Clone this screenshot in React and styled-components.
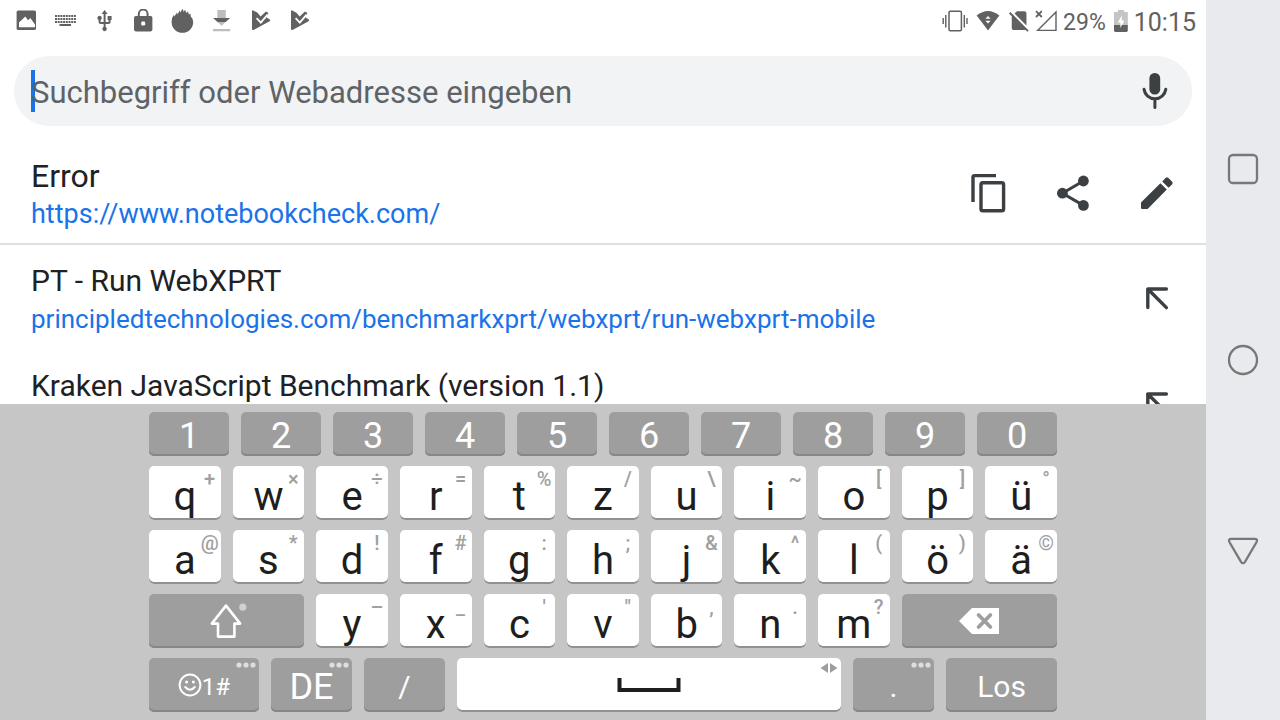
import React from 'react'
import styled, { createGlobalStyle } from 'styled-components'

const digits = ['1', '2', '3', '4', '5', '6', '7', '8', '9', '0']

const topLetters = [
    ['q', '+'], ['w', '×'], ['e', '÷'], ['r', '='], ['t', '%'], ['z', '/'],
    ['u', '\\'], ['i', '~'], ['o', '['], ['p', ']'], ['ü', '°'],
]

const homeLetters = [
    ['a', '@'], ['s', '*'], ['d', '!'], ['f', '#'], ['g', ':'], ['h', ';'],
    ['j', '&'], ['k', '^'], ['l', '('], ['ö', ')'], ['ä', '©'],
]

const bottomLetters = [
    ['y', '–'], ['x', '_'], ['c', "'"], ['v', '"'], ['b', ','], ['n', '.'], ['m', '?'],
]

const PlayCheck = () => (
    <StatusIcon viewBox="0 0 24 24">
        <path d="M4 2.2Q4 1 5.2 1.4L9.5 3.8 12.6 7.4 18 2.4 20.4 4 18.6 8.6 21.8 10.6Q22.6 11.4 21.6 12.2L6 20.8Q4 21.6 4 20z" />
        <path d="M8.6 9.2L12.8 13.6 19.6 5.6" fill="none" stroke="#fff" strokeWidth="1.8" />
    </StatusIcon>
)

const ArrowInsert = () => (
    <svg width="40" height="40" viewBox="0 0 40 40" fill="none" stroke="#3c4043" strokeWidth="3.4" strokeLinecap="round" strokeLinejoin="round">
        <path d="M29.4 11H10.8V29.6M10.8 11L29.4 29.6" />
    </svg>
)

const Dots = () => (
    <svg width="20" height="6" viewBox="0 0 20 6" fill="#dedede">
        <circle cx="3" cy="3" r="2.6" />
        <circle cx="10" cy="3" r="2.6" />
        <circle cx="17" cy="3" r="2.6" />
    </svg>
)

const StatusBar = () => (
    <Status>
        <Notifications>
            <StatusIcon viewBox="0 0 24 24">
                <rect x="2.6" y="1.4" width="19.4" height="19.6" rx="1.6" />
                <path d="M5 18.3V13.4L11.3 7.5 14 11.2 16.3 9 21 15.4V18.3z" fill="#fff" />
            </StatusIcon>
            <StatusIcon viewBox="0 0 24 24">
                <path d="M2 7H23M2 10H23M2 13H23" fill="none" stroke="#616161" strokeWidth="2" strokeDasharray="2 .7" />
                <rect x="6.5" y="15" width="11.5" height="2" />
            </StatusIcon>
            <StatusIcon viewBox="0 0 24 24">
                <path transform="translate(.6 0)" d="M15 7v4h1v2h-3V5h2l-3-4-3 4h2v8H8v-2.07c.7-.37 1.2-1.08 1.2-1.93 0-1.21-.99-2.2-2.2-2.2-1.21 0-2.2.99-2.2 2.2 0 .85.5 1.56 1.2 1.93V13c0 1.11.89 2 2 2h3v3.05c-.71.37-1.2 1.1-1.2 1.95 0 1.22.99 2.2 2.2 2.2 1.21 0 2.2-.98 2.2-2.2 0-.85-.49-1.58-1.2-1.95V15h3c1.11 0 2-.89 2-2v-2h1V7h-4z" />
            </StatusIcon>
            <StatusIcon viewBox="0 0 24 24">
                <rect x="3" y="7" width="18.4" height="15.4" rx="1.8" />
                <path d="M7.8 8V5a4.4 4.4 0 0 1 8.8 0v3" fill="none" stroke="#616161" strokeWidth="2" />
                <rect x="10.2" y="12.6" width="4" height="4" rx="1.4" fill="#fff" />
            </StatusIcon>
            <StatusIcon viewBox="0 0 24 24">
                <path d="M1.6 13Q1.5 8.6 4 5.8L4.4 7.6 7 3.6 7.6 5.4 9.6 1.6 10.4 3.6 12.6 -.4 13.8 3 15 .4 16.4 4 18 2.2 18.8 5.4 20.4 4.6 20.8 7.4Q23.2 9.6 23.2 13A10.8 10.8 0 0 1 1.6 13z" />
            </StatusIcon>
            <StatusIcon viewBox="0 0 24 24">
                <path d="M8.4 1H16.8V9H21L12.6 16.8 4.2 9H8.4zM4 20H21.2V22.2H4z" fill="#bdbdbd" />
                <path d="M4.2 9H21L16.6 13H8.6z" />
            </StatusIcon>
            <PlayCheck />
            <PlayCheck />
        </Notifications>
        <System>
            <StatusIcon $width={32} viewBox="0 0 32 24">
                <rect x="10" y="2.3" width="12.4" height="19.4" rx="1.2" fill="none" stroke="#616161" strokeWidth="1.5" />
                <path d="M4.2 9V15M6.8 6V18.6M25.3 6V18.6M28 9V15" fill="none" stroke="#616161" strokeWidth="1.4" />
            </StatusIcon>
            <StatusIcon $width={28} viewBox="0 0 28 24">
                <path d="M1.7 6.4Q13-2.6 24.3 6.4L13 21.4z" />
                <path d="M13 7L15.6 9.8H10.4zM13 14.6L15.6 11.8H10.4z" fill="#fff" />
            </StatusIcon>
            <StatusIcon viewBox="0 0 24 24">
                <path transform="translate(-.5 -1) scale(1.05)" d="M19 5c0-1.1-.9-2-1.99-2h-7L7.66 5.34 19 16.68V5zM3.65 3.88L2.38 5.15 5 7.77V19c0 1.1.9 2 2 2h10.01c.35 0 .67-.1.96-.26l1.88 1.88 1.27-1.27L3.65 3.88z" />
            </StatusIcon>
            <StatusIcon viewBox="0 0 24 24">
                <path d="M1 2.2L6.8 8M6.8 2.2L1 8" fill="none" stroke="#616161" strokeWidth="1.8" />
                <path d="M2.6 21.4L21 3V21.4z" fill="none" stroke="#616161" strokeWidth="1.4" />
            </StatusIcon>
            <Percent>29%</Percent>
            <StatusIcon $width={18} viewBox="0 0 18 24">
                <path d="M8 1H14.2V3H17.8V17H4V3H8z" fill="#c4c4c4" />
                <path d="M4 16H17.8V21.6Q17.8 23 16.4 23H5.4Q4 23 4 21.6z" />
                <path d="M11.8 6.6V11.6H14.4L10.4 19V13.6H7.8z" fill="#fff" />
            </StatusIcon>
            <Clock>10:15</Clock>
        </System>
    </Status>
)

const SearchBar = () => (
    <Search>
        <Caret />
        <SearchInput type="text" aria-label="Suchbegriff oder Webadresse eingeben" placeholder="Suchbegriff oder Webadresse eingeben" />
        <IconButton aria-label="Sprachsuche">
            <svg width="40" height="40" viewBox="0 0 40 40">
                <rect x="14.4" y="2" width="10.8" height="21.4" rx="5.2" fill="#3c4043" />
                <path d="M9 18.2a11 11 0 0 0 21.8 0M19.9 29.6V36.6" fill="none" stroke="#3c4043" strokeWidth="3" strokeLinecap="round" />
            </svg>
        </IconButton>
    </Search>
)

const Suggestions = () => (
    <SuggestionList>
        <Suggestion $divider>
            <SuggestionText>
                <Title $large>Error</Title>
                <Url $large href="https://www.notebookcheck.com/">https://www.notebookcheck.com/</Url>
            </SuggestionText>
            <IconButton aria-label="Kopieren">
                <svg width="40" height="40" viewBox="0 0 40 40" fill="none" stroke="#3c4043" strokeWidth="3.4">
                    <path d="M27 2.6H5.6Q4 2.6 4 4.2V29" />
                    <rect x="12" y="9.8" width="22.6" height="28" rx="1.8" />
                </svg>
            </IconButton>
            <IconButton aria-label="Teilen">
                <svg width="40" height="40" viewBox="0 0 40 40" fill="#3c4043">
                    <path d="M30.4 8L9.4 20.2 30.4 32.4" fill="none" stroke="#3c4043" strokeWidth="3" />
                    <circle cx="9.4" cy="20.2" r="5.4" />
                    <circle cx="30.4" cy="8" r="5.4" />
                    <circle cx="30.4" cy="32.4" r="5.4" />
                </svg>
            </IconButton>
            <IconButton aria-label="Bearbeiten">
                <svg width="40" height="40" viewBox="0 0 40 40" fill="#3c4043">
                    <path d="M4 29.4L23.4 10.2 29.8 16.6 10.6 36H5Q4 36 4 35zM25.2 8.4L28.8 4.8Q30 3.8 31.2 4.8L35.2 8.8Q36.2 10 35.2 11.2L31.6 14.8z" />
                </svg>
            </IconButton>
        </Suggestion>
        <Suggestion>
            <SuggestionText>
                <Title>PT - Run WebXPRT</Title>
                <Url href="https://principledtechnologies.com/benchmarkxprt/webxprt/run-webxprt-mobile">
                    principledtechnologies.com/benchmarkxprt/webxprt/run-webxprt-mobile
                </Url>
            </SuggestionText>
            <IconButton aria-label="Übernehmen"><ArrowInsert /></IconButton>
        </Suggestion>
        <Suggestion>
            <SuggestionText>
                <Title>Kraken JavaScript Benchmark (version 1.1)</Title>
            </SuggestionText>
            <IconButton aria-label="Übernehmen"><ArrowInsert /></IconButton>
        </Suggestion>
    </SuggestionList>
)

const letterKeys = (letters) => letters.map(([letter, hint]) => (
    <LetterKey key={letter}>
        <Letter>{letter}</Letter>
        <Hint>{hint}</Hint>
    </LetterKey>
))

const Keyboard = () => (
    <KeyboardPanel>
        <DigitRow>
            {digits.map((digit) => <DarkKey key={digit}><Label $size={36}>{digit}</Label></DarkKey>)}
        </DigitRow>
        <LetterRow>{letterKeys(topLetters)}</LetterRow>
        <LetterRow>{letterKeys(homeLetters)}</LetterRow>
        <LetterRow>
            <WideKey aria-label="Umschalt">
                <svg width="40" height="40" viewBox="0 0 40 40">
                    <path d="M19 4.6L33.2 22.6H27.4V35.6H11V22.6H4.8z" fill="none" stroke="#fff" strokeWidth="2.6" strokeLinejoin="round" />
                    <circle cx="35.8" cy="6.2" r="3.6" fill="#d0d0d0" />
                </svg>
            </WideKey>
            {letterKeys(bottomLetters)}
            <WideKey aria-label="Löschen">
                <svg width="40" height="26" viewBox="0 0 40 26">
                    <path d="M0 13L13 0H40V26H13z" fill="#fff" />
                    <path d="M19.6 7L31.4 19M31.4 7L19.6 19" stroke="#9e9e9e" strokeWidth="3.8" strokeLinecap="round" />
                </svg>
            </WideKey>
        </LetterRow>
        <ActionRow>
            <DarkKey>
                <svg width="24" height="24" viewBox="0 0 24 24" fill="none" stroke="#fff" strokeWidth="2">
                    <circle cx="12" cy="12" r="10.4" />
                    <path d="M7.2 14Q12 19.6 16.8 14" strokeLinecap="round" />
                    <circle cx="8.6" cy="9" r="1.5" fill="#fff" stroke="none" />
                    <circle cx="15.4" cy="9" r="1.5" fill="#fff" stroke="none" />
                </svg>
                <Label $size={24}>1#</Label>
                <Corner><Dots /></Corner>
            </DarkKey>
            <DarkKey>
                <Label $size={36}>DE</Label>
                <Corner><Dots /></Corner>
            </DarkKey>
            <DarkKey><Label $size={30}>/</Label></DarkKey>
            <LetterKey aria-label="Leertaste">
                <svg width="64" height="14" viewBox="0 0 64 14">
                    <path d="M2.5 0V12H61.5V0" fill="none" stroke="#1e1e1e" strokeWidth="4" />
                </svg>
                <Corner>
                    <svg width="18" height="12" viewBox="0 0 18 12" fill="#9e9e9e">
                        <path d="M.6 6L8 1V11zM17.4 6L10 1V11z" />
                    </svg>
                </Corner>
            </LetterKey>
            <DarkKey>
                <Label $size={30}>.</Label>
                <Corner><Dots /></Corner>
            </DarkKey>
            <DarkKey><Label $size={30}>Los</Label></DarkKey>
        </ActionRow>
    </KeyboardPanel>
)

const App = () => (
    <Screen>
        <GlobalStyle />
        <Browser>
            <StatusBar />
            <SearchBar />
            <Suggestions />
            <Keyboard />
        </Browser>
        <NavBar>
            <NavButton aria-label="Übersicht">
                <svg width="32" height="32" viewBox="0 0 32 32"><rect x="2" y="2" width="28" height="28" rx="4" /></svg>
            </NavButton>
            <NavButton aria-label="Startseite">
                <svg width="32" height="32" viewBox="0 0 32 32"><circle cx="16" cy="16" r="14" /></svg>
            </NavButton>
            <NavButton aria-label="Zurück">
                <svg width="32" height="32" viewBox="0 0 32 32">
                    <path d="M4.4 3.8H27.6Q31 3.8 29.6 7L18 26.8Q16 29.6 14 26.8L2.4 7Q1 3.8 4.4 3.8z" />
                </svg>
            </NavButton>
        </NavBar>
    </Screen>
)

const GlobalStyle = createGlobalStyle`
* {
    box-sizing: border-box;
}

body {
    margin: 0;
    font-family: Roboto, sans-serif;
    background: #fff;
}

button {
    border: none;
    padding: 0;
    font-family: inherit;
    cursor: pointer;
}

svg {
    display: block;
    flex: none;
}
`

const Screen = styled.div`
display: flex;
height: 100vh;
overflow: hidden;
`

const Browser = styled.main`
flex: 1;
min-width: 0;
display: flex;
flex-direction: column;
`

const Status = styled.header`
display: flex;
justify-content: space-between;
align-items: center;
height: 42px;
padding: 0 10px 0 14px;
margin-bottom: 14px;
color: #616161;
`

const Notifications = styled.div`
display: flex;
gap: 15px;
`

const System = styled.div`
display: flex;
align-items: center;
gap: 4px;
`

const StatusIcon = styled.svg`
width: ${({ $width }) => $width || 24}px;
height: 24px;
fill: #616161;
`

const Percent = styled.span`
font-size: 23px;
line-height: 24px;
padding-top: 3px;
`

const Clock = styled.span`
font-size: 25px;
line-height: 24px;
padding: 4px 0 0 2px;
`

const Search = styled.div`
position: relative;
display: flex;
align-items: center;
flex: none;
height: 70px;
margin: 0 14px;
padding: 0 17px;
border-radius: 35px;
background: #f1f3f4;
`

const Caret = styled.span`
position: absolute;
left: 17px;
top: 14px;
width: 4px;
height: 42px;
background: #1a73e8;
`

const SearchInput = styled.input`
position: relative;
flex: 1;
min-width: 0;
height: 42px;
padding: 2px 0 0;
border: none;
outline: none;
background: transparent;
font-family: inherit;
font-size: 31px;
color: #202124;

&::placeholder{
    color: #5f6368;
    opacity: 1;
}
`

const IconButton = styled.button`
flex: none;
width: 40px;
height: 40px;
background: none;
`

const SuggestionList = styled.ul`
flex: 1;
min-height: 0;
margin: 14px 0 0;
padding: 0;
list-style: none;
overflow: hidden;
`

const Suggestion = styled.li`
display: flex;
align-items: center;
gap: 44px;
height: 105px;
padding: 0 29px 0 31px;
box-shadow: ${({ $divider }) => $divider ? 'inset 0 -2px #dfdfdf' : 'none'};
`

const SuggestionText = styled.div`
flex: 1;
min-width: 0;
align-self: flex-start;
padding-top: 18px;
white-space: nowrap;
`

const Title = styled.div`
font-size: ${({ $large }) => $large ? 32 : 30}px;
line-height: 36px;
color: #202124;
`

const Url = styled.a`
display: block;
font-size: ${({ $large }) => $large ? 27 : 26}px;
line-height: 40px;
color: #1a73e8;
text-decoration: none;
`

const KeyboardPanel = styled.section`
flex: none;
display: grid;
grid-template-columns: minmax(0, 908px);
justify-content: center;
gap: 10px;
padding: 8px;
background: #c6c6c6;
`

const Row = styled.div`
display: grid;
gap: 12px;
height: 54px;
`

const DigitRow = styled(Row)`
grid-template-columns: repeat(10, 1fr);
height: 44px;
`

const LetterRow = styled(Row)`
grid-template-columns: repeat(11, 1fr);
`

const ActionRow = styled(Row)`
grid-template-columns: 110px 81px 81px 1fr 81px 111px;
`

const Key = styled.button`
position: relative;
display: flex;
align-items: center;
justify-content: center;
min-width: 0;
border-radius: 5px;
`

const LetterKey = styled(Key)`
background: #fff;
color: #1e1e1e;
box-shadow: inset 0 -2px #919191;
`

const DarkKey = styled(Key)`
background: #9e9e9e;
color: #fff;
box-shadow: inset 0 -2px #878787;
`

const WideKey = styled(DarkKey)`
grid-column: span 2;
`

const Letter = styled.span`
padding-top: 6px;
font-size: 40px;
`

const Label = styled.span`
padding-top: 4px;
font-size: ${({ $size }) => $size}px;
line-height: 36px;
`

const Hint = styled.span`
position: absolute;
top: 1px;
right: 0;
width: 22px;
font-size: 20px;
line-height: 24px;
font-weight: 500;
text-align: center;
color: #a0a0a0;
`

const Corner = styled.span`
position: absolute;
top: 4px;
right: 3px;
`

const NavBar = styled.nav`
display: flex;
flex-direction: column;
align-items: center;
justify-content: center;
gap: 159px;
width: 74px;
background: #e8eaee;
`

const NavButton = styled.button`
background: none;

svg{
    fill: none;
    stroke: #787878;
    stroke-width: 2.3;
}
`

export default App
